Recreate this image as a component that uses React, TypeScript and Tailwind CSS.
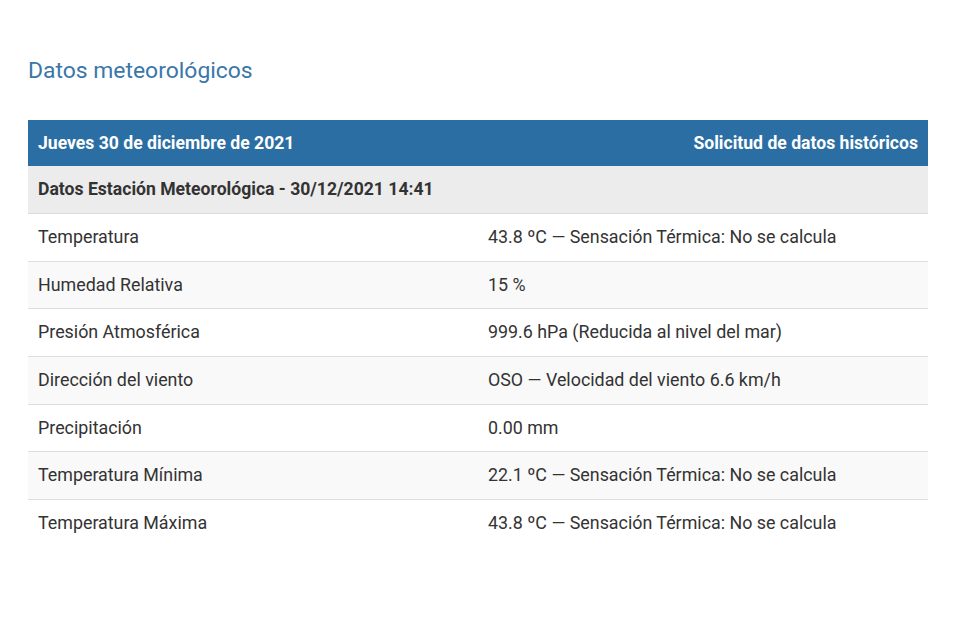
import React from 'react';

const rows: { label: string; value: string; h: string }[] = [
  { label: 'Temperatura', value: '43.8 ºC — Sensación Térmica: No se calcula', h: 'h-[48px]' },
  { label: 'Humedad Relativa', value: '15 %', h: 'h-[47px]' },
  { label: 'Presión Atmosférica', value: '999.6 hPa (Reducida al nivel del mar)', h: 'h-[48px]' },
  { label: 'Dirección del viento', value: 'OSO — Velocidad del viento 6.6 km/h', h: 'h-[48px]' },
  { label: 'Precipitación', value: '0.00 mm', h: 'h-[47px]' },
  { label: 'Temperatura Mínima', value: '22.1 ºC — Sensación Térmica: No se calcula', h: 'h-[48px]' },
  { label: 'Temperatura Máxima', value: '43.8 ºC — Sensación Térmica: No se calcula', h: 'h-[48px]' },
];

export default function App() {
  return (
    <div className="min-h-screen bg-white text-[#333] font-['Roboto',sans-serif] px-[28px] pt-[56px]">
      <h2 className="text-[22.9px] leading-[30px] text-[#3a77a8] h-[64px]">Datos meteorológicos</h2>

      <div className="w-[900px]">
        <div className="h-[46px] bg-[#2b6ea3] text-white font-bold text-[17.6px] flex items-center justify-between px-[10px]">
          <span>Jueves 30 de diciembre de 2021</span>
          <span>Solicitud de datos históricos</span>
        </div>
        <div className="h-[47px] bg-[#ececec] font-bold text-[17.6px] flex items-center px-[10px]">
          Datos Estación Meteorológica - 30/12/2021 14:41
        </div>
        {rows.map((r, i) => (
          <div
            key={r.label}
            className={`${r.h} border-t border-[#dddddd] grid grid-cols-2 items-center text-[17.85px] ${i % 2 === 1 ? 'bg-[#f9f9f9]' : 'bg-white'}`}
          >
            <span className="px-[10px]">{r.label}</span>
            <span className="px-[10px]">{r.value}</span>
          </div>
        ))}
      </div>
    </div>
  );
}
